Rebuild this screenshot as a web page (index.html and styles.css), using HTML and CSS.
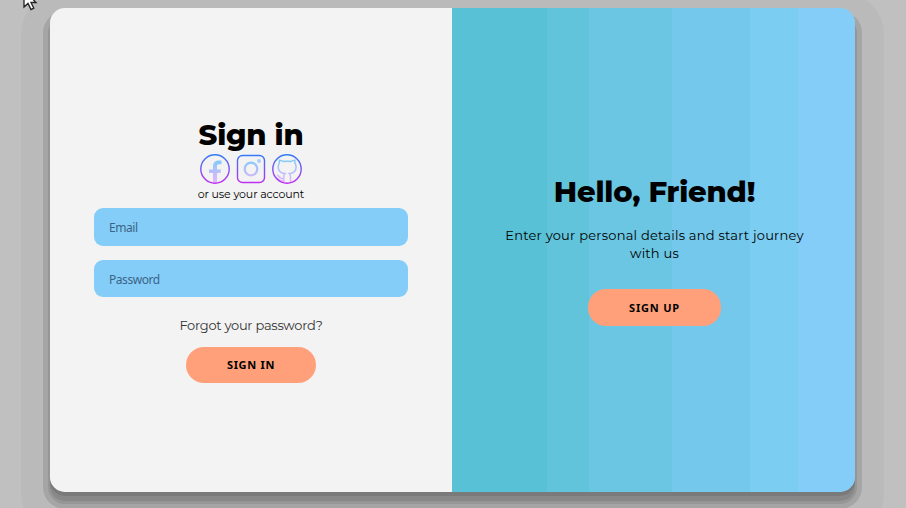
FILE: index.html
```html
<!DOCTYPE html>
<html lang="en">
<head>
<meta charset="utf-8">
<title>Sign in</title>
<link rel="stylesheet" href="styles.css">
</head>
<body>
<svg class="cursor" width="16" height="22" viewBox="0 0 16 22"><path d="M1 0V17L5 13.4L8 19.6L10.8 18.2L8 12.5H13Z" fill="#fff" stroke="#222" stroke-width="1.3"/></svg>
<main class="card">
  <form class="panel signin">
    <h1 class="title">Sign in</h1>
    <div class="social">
      <svg width="30" height="30" viewBox="0 0 30 30" fill="none">
        <defs>
          <linearGradient id="ring" x1="0" y1="0" x2="0" y2="30" gradientUnits="userSpaceOnUse"><stop stop-color="#2e7cf6"/><stop offset="1" stop-color="#c22cf0"/></linearGradient>
          <linearGradient id="soft" x1="0" y1="5" x2="0" y2="26" gradientUnits="userSpaceOnUse"><stop stop-color="#7bcdfa"/><stop offset="1" stop-color="#dfb6fb"/></linearGradient>
        </defs>
        <path d="M13 28.5V19H9V15.5H13V12.5C13 8.5 15.5 6.5 18.5 6.5H21.5V10.2H19.4C17.6 10.2 17 11 17 12.4V15.5H21L20.5 19H17V28.5Z" fill="url(#soft)"/>
        <circle cx="15" cy="15" r="14.2" stroke="url(#ring)" stroke-width="1.4"/>
      </svg>
      <svg width="30" height="30" viewBox="0 0 30 30" fill="none">
        <rect x="1.5" y="1.5" width="27" height="27" rx="5" stroke="url(#ring)" stroke-width="1.4"/>
        <circle cx="15" cy="15" r="6.3" stroke="url(#soft)" stroke-width="2.3"/>
        <circle cx="23" cy="7" r="1.9" fill="#a9cdfa"/>
      </svg>
      <svg width="30" height="30" viewBox="0 0 30 30" fill="none">
        <path d="M11.8 28V22.5C11.8 21 12.3 20.3 13 19.6C8.5 19.2 6.2 17 6.2 13C6.2 11 6.8 9.8 7.4 8.8V6.2C9.2 6.2 10.6 6.9 11.8 7.6C14 7.1 16.5 7.1 18.5 7.6C19.8 6.7 21.2 6.2 22.8 6.2V8.8C23.6 9.8 24.1 11 24.1 13C24.1 17 21.8 19.2 17.4 19.6C18.2 20.3 18.5 21.2 18.5 22.5V28M11.8 24.6C8.3 25.3 7.8 22 5.2 21.2M11.8 27C8.5 27.5 7 25.5 5 24" stroke="url(#soft)" stroke-width="1.5"/>
        <circle cx="15" cy="15" r="14.2" stroke="url(#ring)" stroke-width="1.4"/>
      </svg>
    </div>
    <span class="hint">or use your account</span>
    <input class="field" type="email" placeholder="Email">
    <input class="field second" type="password" placeholder="Password">
    <a class="forgot">Forgot your password?</a>
    <button class="button" type="button">SIGN IN</button>
  </form>
  <section class="panel welcome">
    <h1 class="title hello">Hello, Friend!</h1>
    <p class="copy">Enter your personal details and start journey<br>with us</p>
    <button class="button signup" type="button">SIGN UP</button>
  </section>
</main>
</body>
</html>
```
FILE: styles.css
```css
* { box-sizing: border-box; }
body {
  margin: 0;
  height: 508px;
  padding: 8px 51px 0 50px;
  overflow: hidden;
  background: #c0c0c0;
  font-family: Montserrat, Inter, sans-serif;
  color: #000;
}
.cursor { position: absolute; left: 23px; top: -10px; z-index: 1; }
.card {
  display: grid;
  grid-template-columns: 402px 403px;
  height: 484px;
  border-radius: 15px;
  box-shadow:
    0 4px 0 0 #7a7a7a,
    0 9px 0 0 #888,
    0 10px 0 2px #969696,
    0 10px 0 7px #a5a5a5,
    0 14px 0 29px #bababa;
}
.panel { display: flex; flex-direction: column; align-items: center; }
.signin { background: #f3f3f3; border-radius: 15px 0 0 15px; padding: 109px 44px 0; }
.title {
  margin: 0;
  height: 36px;
  font-size: 29px;
  line-height: 36px;
  font-weight: 800;
  letter-spacing: -0.2px;
  white-space: nowrap;
}
.social { display: flex; gap: 6px; height: 30px; margin-top: 1px; }
.social svg { display: block; }
.hint { height: 16px; margin-top: 2px; font-size: 11px; line-height: 16px; letter-spacing: -0.12px; white-space: nowrap; }
.field {
  width: 314px;
  height: 38px;
  margin: 6px 0 0;
  padding: 0 15px;
  border: 0;
  border-radius: 9px;
  background: #84cdf8;
  font: 12px "Noto Sans", sans-serif;
  letter-spacing: -0.45px;
}
.second { height: 37px; margin-top: 14px; padding-top: 2px; }
.field::placeholder { color: #3c6485; opacity: 1; }
.forgot { margin-top: 18px; height: 20px; color: #333; font-size: 13px; line-height: 20px; letter-spacing: -0.27px; white-space: nowrap; }
.button {
  width: 130px;
  height: 36px;
  margin-top: 12px;
  padding: 0 0 2px;
  border: 0;
  border-radius: 18px;
  background: #ffa07a;
  color: #000;
  font: bold 11px "Noto Sans", sans-serif;
  letter-spacing: 0.7px;
}
.welcome {
  padding-top: 166px;
  padding-left: 2px;
  border-radius: 0 15px 15px 0;
  background: linear-gradient(90deg,
    #58c1d5 95px, #61c4db 95px 137px, #6ac6e2 137px 220px,
    #74c8ec 220px 298px, #7ccdf2 298px 346px, #84cdf8 346px);
}
.copy { margin: 16px 0 0; font-size: 13px; line-height: 18px; text-align: center; letter-spacing: 0.23px; white-space: nowrap; }
.signup { width: 133px; height: 37px; margin-top: 27px; padding: 0; letter-spacing: 0.8px; }
```
